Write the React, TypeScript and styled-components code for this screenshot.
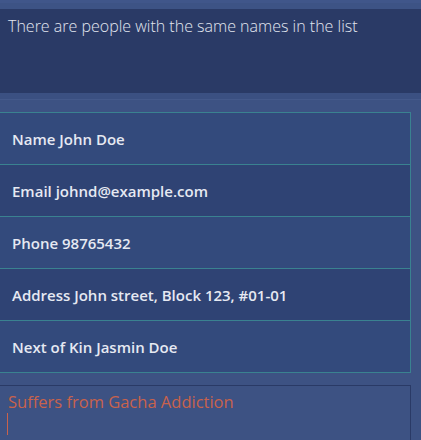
import React from "react";
import styled, { createGlobalStyle } from "styled-components";

const Global = createGlobalStyle`
  html, body { margin: 0; padding: 0; background: #3d5283; }
  body { width: 421px; height: 440px; overflow: hidden; font-family: "Open Sans", "Noto Sans", sans-serif; }
`;

const Page = styled.div`
  display: flex;
  flex-direction: column;
  width: 421px;
  height: 440px;
  background: #3d5283;
  overflow: hidden;
  & > * { flex-shrink: 0; }
`;

const TopStrip = styled.div`
  height: 9px;
  background: #3d5385;
  border-top: 3px solid #40568a;
  box-sizing: border-box;
`;

const ResultBox = styled.div`
  height: 84px;
  box-sizing: border-box;
  background: #2a3a66;
  padding: 6px 8px;
  color: #e2e6f0;
  font-size: 16px;
  font-weight: 300;
  line-height: 22px;
`;

const Divider = styled.div`
  height: 7px;
  background: #3b5082;
  border-bottom: 1px solid #44598b;
  box-sizing: border-box;
`;

const ListPane = styled.div`
  margin-top: 12px;
  width: 411px;
  box-sizing: border-box;
  border: 1px solid #3a8290;
  border-left: none;
  display: flex;
  flex-direction: column;
`;

const Row = styled.div<{ $dark: boolean }>`
  height: 52px;
  box-sizing: border-box;
  display: flex;
  align-items: center;
  padding-left: 12px;
  background: ${(p) => (p.$dark ? "#2f4374" : "#334a7c")};
  border-bottom: 1px solid #3a8290;
  &:last-child { border-bottom: none; height: 51px; }
  color: #e6e9f2;
  font-size: 15px;
  font-weight: 600;
`;

const Remark = styled.div`
  margin-top: 12px;
  width: 411px;
  height: 60px;
  box-sizing: border-box;
  border: 1px solid #2a3a66;
  border-left: none;
  padding: 4px 8px;
  color: #c9624c;
  font-size: 16.5px;
  font-weight: 400;
  line-height: 23px;
`;

const Caret = styled.span`
  display: block;
  width: 1px;
  height: 22px;
  margin-left: -1px;
  background: #c9624c;
`;

const rows = [
  "Name John Doe",
  "Email johnd@example.com",
  "Phone 98765432",
  "Address John street, Block 123, #01-01",
  "Next of Kin Jasmin Doe",
];

export default function App() {
  return (
    <Page>
      <Global />
      <TopStrip />
      <ResultBox>There are people with the same names in the list</ResultBox>
      <Divider />
      <ListPane>
        {rows.map((r, i) => (
          <Row key={r} $dark={i % 2 === 1}>
            {r}
          </Row>
        ))}
      </ListPane>
      <Remark>
        Suffers from Gacha Addiction
        <Caret />
      </Remark>
    </Page>
  );
}
